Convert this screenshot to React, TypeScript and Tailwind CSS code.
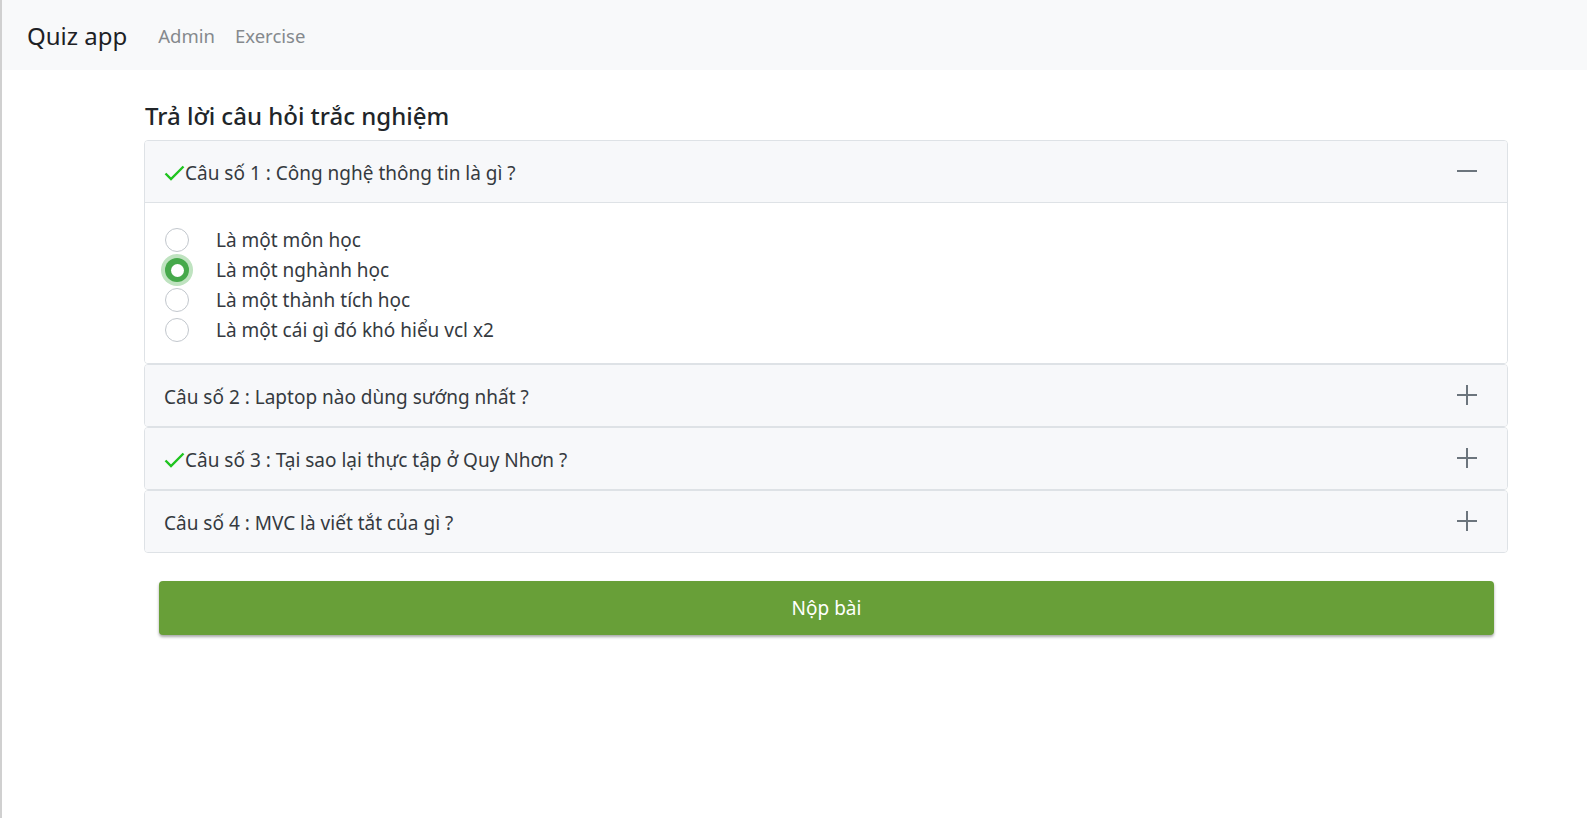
import React, { useState } from 'react';

interface Question {
  id: number;
  title: string;
  answered: boolean;
  options: string[];
}

const questions: Question[] = [
  {
    id: 1,
    title: 'Câu số 1 : Công nghệ thông tin là gì ?',
    answered: true,
    options: ['Là một môn học', 'Là một nghành học', 'Là một thành tích học', 'Là một cái gì đó khó hiểu vcl x2'],
  },
  { id: 2, title: 'Câu số 2 : Laptop nào dùng sướng nhất ?', answered: false, options: [] },
  { id: 3, title: 'Câu số 3 : Tại sao lại thực tập ở Quy Nhơn ?', answered: true, options: [] },
  { id: 4, title: 'Câu số 4 : MVC là viết tắt của gì ?', answered: false, options: [] },
];

function CheckIcon() {
  return (
    <svg width="21" height="16" viewBox="0 0 21 16" className="shrink-0">
      <polyline points="1.5,8.5 7,14 19.5,1.5" fill="none" stroke="#1fc41f" strokeWidth="2.4" />
    </svg>
  );
}

function ToggleIcon({ open }: { open: boolean }) {
  return (
    <svg width="20" height="20" viewBox="0 0 20 20" className="shrink-0 -mt-[4px]">
      <line x1="0" y1="10" x2="20" y2="10" stroke="#6c757d" strokeWidth="2" />
      {!open && <line x1="10" y1="0" x2="10" y2="20" stroke="#6c757d" strokeWidth="2" />}
    </svg>
  );
}

export default function App() {
  const [openId, setOpenId] = useState<number | null>(1);
  const [picked, setPicked] = useState<Record<number, number>>({ 1: 1 });

  return (
    <div className="min-h-[818px] bg-white border-l-2 border-[#d0d0d0] font-['Noto_Sans',sans-serif] text-[#212529]">
      <nav className="h-[70px] bg-[#f8f9fa] flex items-center pl-[25px] pt-[2px]">
        <span className="text-[24px] text-[#1d2125] mr-[31px]">Quiz app</span>
        <a className="text-[18.5px] text-[#85898d] mr-[20px]">Admin</a>
        <a className="text-[18.5px] text-[#85898d]">Exercise</a>
      </nav>

      <main className="ml-[142px] w-[1364px] pt-[31px]">
        <h5 className="text-[24px] leading-[30px] font-medium text-[#212529] mb-[9px] pl-px">
          Trả lời câu hỏi trắc nghiệm
        </h5>

        <div className="flex flex-col">
          {questions.map((q) => {
            const open = openId === q.id;
            return (
              <div key={q.id} className="border border-[#dee2e6] rounded-[4px] overflow-hidden">
                <button
                  onClick={() => setOpenId(open ? null : q.id)}
                  className={`w-full flex items-center bg-[#f7f8fa] pl-[19px] pr-[30px] pt-[3px] text-left ${
                    open ? 'border-b border-[#dee2e6] h-[62px]' : 'h-[61px]'
                  }`}
                >
                  {q.answered && <CheckIcon />}
                  <span className="flex-1 text-[19px] text-[#353a3f]">{q.title}</span>
                  <ToggleIcon open={open} />
                </button>
                {open && (
                  <div className="bg-white pl-[20px] pt-[22px] pb-[18px]">
                    {q.options.map((opt, i) => {
                      const checked = picked[q.id] === i;
                      return (
                        <label key={i} className="h-[30px] flex items-center cursor-pointer">
                          <span
                            onClick={() => setPicked({ ...picked, [q.id]: i })}
                            className={`w-[24px] h-[24px] rounded-full flex items-center justify-center shrink-0 ${
                              checked
                                ? 'bg-[#46a94b] shadow-[0_0_0_4px_#bfe3c0]'
                                : 'border-[1.5px] border-[#c2c7cd] bg-white'
                            }`}
                          >
                            {checked && <span className="w-[13px] h-[13px] rounded-full bg-white" />}
                          </span>
                          <span className="ml-[27px] text-[19px] text-[#353a3f]">{opt}</span>
                        </label>
                      );
                    })}
                  </div>
                )}
              </div>
            );
          })}
        </div>

        <button className="mt-[28px] ml-[15px] w-[1335px] h-[54px] rounded-[4px] bg-[#689f38] text-white text-[19px] shadow-[0_2px_3px_rgba(0,0,0,0.35)]">
          Nộp bài
        </button>
      </main>
    </div>
  );
}
